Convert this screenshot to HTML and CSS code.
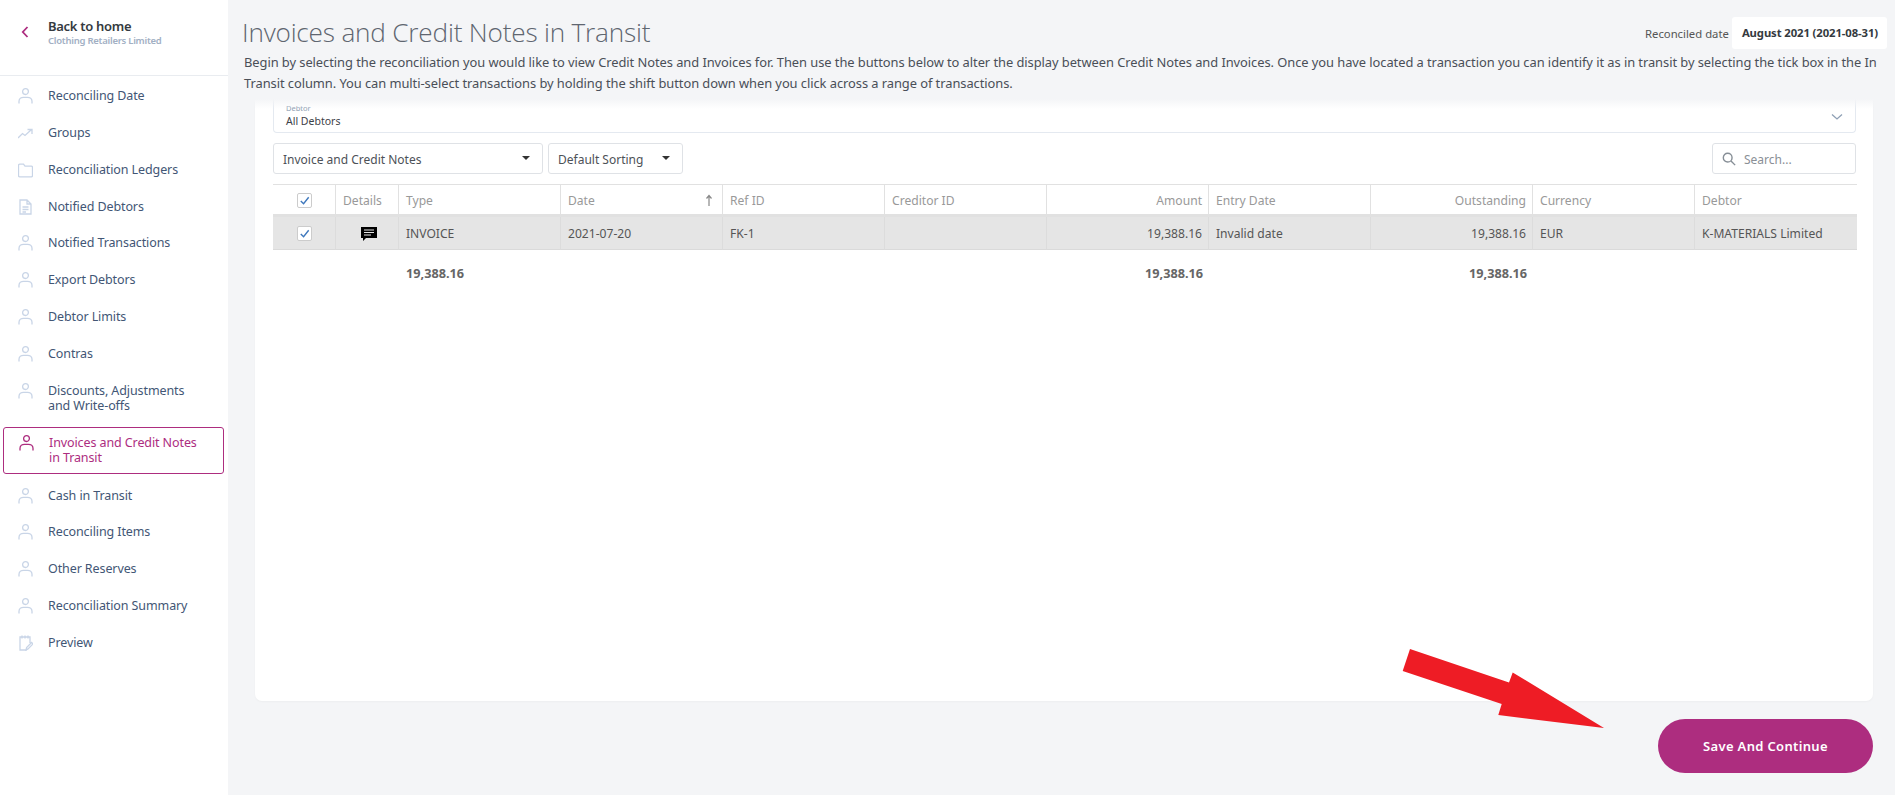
FILE: index.html
```html
<!DOCTYPE html>
<html lang="en">
<head>
<meta charset="utf-8">
<title>Invoices and Credit Notes in Transit</title>
<link rel="stylesheet" href="styles.css">
</head>
<body>
<svg width="0" height="0" class="defs">
  <symbol id="person" viewBox="0 0 15 16"><circle cx="7.5" cy="3.6" r="2.9"/><path d="M1 15.5v-2.2C1 10.8 3.2 9.300 5.500 9.300h4c2.300 0 4.500 1.500 4.500 4v2.200"/></symbol>
</svg>
<div class="page">
  <aside class="sidebar">
    <div class="back">
      <svg class="chev" viewBox="0 0 8 12"><path d="M6.500 1 1.800 6l4.700 5"/></svg>
      <div><div class="back-title">Back to home</div><div class="back-sub">Clothing Retailers Limited</div></div>
    </div>
    <nav class="nav">
      <a class="item"><svg class="ico"><use href="#person"/></svg><span>Reconciling Date</span></a>
      <a class="item"><svg class="ico" viewBox="0 0 15 16"><path d="M0 13l4.500-4.500 2.500 2L13 5M9.500 4.500H14V9"/></svg><span>Groups</span></a>
      <a class="item"><svg class="ico" viewBox="0 0 15 16"><path d="M.5 3.500C.5 2.700 1 2.200 1.800 2.200h3.700l1.500 2h6.300c.8 0 1.200.5 1.200 1.200v8.200c0 .8-.5 1.200-1.200 1.200H1.800c-.8 0-1.300-.4-1.300-1.200z"/></svg><span>Reconciliation Ledgers</span></a>
      <a class="item"><svg class="ico" viewBox="0 0 15 16"><path d="M2 1h7l4 4v10H2zM9 1v4h4M4.500 8h6M4.500 10.500h6M4.500 13h3.500"/></svg><span>Notified Debtors</span></a>
      <a class="item"><svg class="ico"><use href="#person"/></svg><span>Notified Transactions</span></a>
      <a class="item"><svg class="ico"><use href="#person"/></svg><span>Export Debtors</span></a>
      <a class="item"><svg class="ico"><use href="#person"/></svg><span>Debtor Limits</span></a>
      <a class="item"><svg class="ico"><use href="#person"/></svg><span>Contras</span></a>
      <a class="item"><svg class="ico"><use href="#person"/></svg><span>Discounts, Adjustments<br>and Write-offs</span></a>
      <a class="item active"><svg class="ico"><use href="#person"/></svg><span>Invoices and Credit Notes<br>in Transit</span></a>
      <a class="item"><svg class="ico"><use href="#person"/></svg><span>Cash in Transit</span></a>
      <a class="item"><svg class="ico"><use href="#person"/></svg><span>Reconciling Items</span></a>
      <a class="item"><svg class="ico"><use href="#person"/></svg><span>Other Reserves</span></a>
      <a class="item"><svg class="ico"><use href="#person"/></svg><span>Reconciliation Summary</span></a>
      <a class="item"><svg class="ico" viewBox="0 0 15 16"><path d="M9 15H2V2h10v6M4 .5v3M7 .5v3M10 .5v3M8 15l.6-2.500 5-5 1.400 1.400-5 5z"/></svg><span>Preview</span></a>
    </nav>
  </aside>
  <main class="main">
    <header class="head">
      <div class="head-top">
        <h1 class="title">Invoices and Credit Notes in Transit</h1>
        <div class="recon"><span class="recon-label">Reconciled date</span><span class="recon-value">August 2021 (2021-08-31)</span></div>
      </div>
      <p class="intro">Begin by selecting the reconciliation you would like to view Credit Notes and Invoices for. Then use the buttons below to alter the display between Credit Notes and Invoices. Once you have located a transaction you can identify it as in transit by selecting the tick box in the In Transit column. You can multi-select transactions by holding the shift button down when you click across a range of transactions.</p>
    </header>
    <section class="card">
      <div class="debtor">
        <div><div class="debtor-label">Debtor</div><div class="debtor-value">All Debtors</div></div>
        <svg class="debtor-chev" viewBox="0 0 12 8"><path d="M1 1.500 6 6l5-4.500"/></svg>
      </div>
      <div class="tools">
        <div class="select wide"><span>Invoice and Credit Notes</span><i class="caret"></i></div>
        <div class="select narrow"><span>Default Sorting</span><i class="caret"></i></div>
        <div class="search">
          <svg class="search-ico" viewBox="0 0 16 16"><circle cx="6.500" cy="6.500" r="5"/><path d="m10.300 10.300 4.700 4.700"/></svg>
          <span>Search...</span>
        </div>
      </div>
      <table class="grid">
        <colgroup><col class="c-s"><col class="c-s"><col class="c-w"><col class="c-w"><col class="c-w"><col class="c-w"><col class="c-w"><col class="c-w"><col class="c-w"><col class="c-w"><col class="c-w"></colgroup>
        <thead>
          <tr>
            <th class="center"><span class="check"><svg viewBox="0 0 14 14"><path d="M3 7.500 6 10.500 11.500 3.500"/></svg></span></th>
            <th>Details</th><th>Type</th>
            <th><div class="sort"><span>Date</span><svg class="sort-ico" viewBox="0 0 8 12"><path d="M4 12V2M1.500 4.500 4 1.500l2.500 3"/></svg></div></th>
            <th>Ref ID</th><th>Creditor ID</th><th class="num">Amount</th><th>Entry Date</th><th class="num">Outstanding</th><th>Currency</th><th>Debtor</th>
          </tr>
        </thead>
        <tbody>
          <tr class="row">
            <td class="center"><span class="check"><svg viewBox="0 0 14 14"><path d="M3 7.500 6 10.500 11.500 3.500"/></svg></span></td>
            <td class="center"><svg class="msg" viewBox="0 0 18 16"><path d="M1 1h16v11H6l-3 3v-3H1z"/><path class="msg-l" d="M4 4h10M4 6.500h10M4 9h7"/></svg></td>
            <td>INVOICE</td><td>2021-07-20</td><td>FK-1</td><td></td><td class="num">19,388.16</td><td>Invalid date</td><td class="num">19,388.16</td><td>EUR</td><td>K-MATERIALS Limited</td>
          </tr>
        </tbody>
        <tfoot>
          <tr><td></td><td></td><td>19,388.16</td><td></td><td></td><td></td><td class="num">19,388.16</td><td></td><td class="num">19,388.16</td><td></td><td></td></tr>
        </tfoot>
      </table>
    </section>
    <div class="foot"><button class="save">Save And Continue</button></div>
  </main>
  <svg class="arrow" viewBox="0 0 204 82"><polygon points="8,0 0.700,22 99.700,55 96.300,66 202,79 110.700,23.500 107,33.500"/></svg>
</div>
</body>
</html>
```

FILE: styles.css
```css
* { box-sizing: border-box; }
html, body { margin: 0; height: 100%; }
body { font-family: "Noto Sans", "Open Sans", sans-serif; background: #f4f5f7; overflow: hidden; }
.defs { position: absolute; }
.page { position: relative; display: flex; width: 1895px; height: 795px; overflow: hidden; }

.sidebar { width: 228px; flex: none; background: #fff; }
.back { height: 76px; padding: 19px 0 0 21px; display: flex; gap: 19px; border-bottom: 1px solid #e9ecf0; }
.chev { width: 8px; height: 12px; margin-top: 7px; fill: none; stroke: #ad2d7f; stroke-width: 1.8; }
.back-title { font-size: 13px; line-height: 15px; font-weight: 600; color: #343a40; letter-spacing: -0.300px; }
.back-sub { font-size: 9.500px; line-height: 13px; font-weight: 600; color: #a2b0c4; letter-spacing: -0.250px; }
.nav { display: flex; flex-direction: column; padding-top: 1px; }
.item { display: flex; gap: 15px; padding: 11px 0 10.850px 18px; font-size: 12.500px; line-height: 15px; color: #425675; letter-spacing: -0.100px; }
.ico { width: 15px; height: 16px; margin-bottom: -1px; flex: none; fill: none; stroke: #c9d5e7; stroke-width: 1.300; }
.item.active { margin: 3px 4px 3px 3px; padding: 7.500px 0 7.500px 15px; border: 1px solid #ad2d7f; border-radius: 3px; color: #ad2d7f; }
.active .ico { stroke: #ad2d7f; }

.main { position: relative; flex: 1; display: flex; flex-direction: column; min-width: 0; }
.head { height: 99px; padding: 0 8px 0 14px; position: relative; z-index: 1; }
.head::after { content: ""; position: absolute; left: 0; right: 0; top: 99px; height: 10px; background: linear-gradient(#f4f5f7, rgba(255,255,255,0)); }
.head-top { display: flex; justify-content: space-between; height: 52px; padding-top: 17px; }
.title { margin: -3px 0 0; font-size: 26.200px; line-height: 36px; font-weight: 300; color: #5f6670; letter-spacing: -0.200px; font-family: "Open Sans", sans-serif; }
.recon { display: flex; height: 32px; align-items: center; font-size: 11.300px; color: #555; gap: 3px; }
.recon-value { background: #fff; height: 32px; line-height: 32px; padding: 0 9px 0 10px; border-radius: 3px; font-weight: 700; color: #343a40; letter-spacing: -0.100px; }
.intro { margin: 0; padding-left: 2px; font-size: 12.900px; line-height: 21px; color: #4a4f57; letter-spacing: -0.060px; }

.card { height: 602px; margin: 0 22px 0 27px; padding: 0 17px 0 18px; background: #fff; border-radius: 0 0 7px 7px; box-shadow: 0 1px 2px rgba(0,0,0,.03); }
.debtor { height: 34px; display: flex; justify-content: space-between; align-items: flex-start; padding: 4px 12px 0 12px; border: 1px solid #e4e9f0; border-top: 0; border-radius: 0 0 4px 4px; }
.debtor-label { font-size: 7.500px; line-height: 11px; color: #8c9bb0; }
.debtor-value { font-size: 10.500px; line-height: 15px; color: #3d4148; }
.debtor-chev { width: 12px; height: 8px; margin-top: 10px; fill: none; stroke: #8fa0b5; stroke-width: 1.300; }
.tools { display: flex; gap: 5px; margin-top: 10px; height: 31px; }
.select, .search { height: 31px; padding-top: 1px; border: 1px solid #dfe2e6; border-radius: 3px; display: flex; align-items: center; font-size: 12px; color: #4d5157; }
.select { justify-content: space-between; padding: 1px 12px 0 9px; }
.wide { width: 270px; }
.narrow { width: 135px; }
.caret { width: 0; height: 0; margin-top: -2px; border-left: 4px solid transparent; border-right: 4px solid transparent; border-top: 4px solid #333; }
.search { margin-left: auto; width: 144px; padding-left: 9px; gap: 8px; color: #8a8f96; }
.search-ico { width: 14px; height: 14px; fill: none; stroke: #868e96; stroke-width: 1.600; }

.grid { width: 1583px; margin-top: 10px; border-collapse: separate; border-spacing: 0; table-layout: fixed; font-size: 12.100px; }
.c-s { width: 63px; }
.c-w { width: 162px; }
.grid th { height: 33px; padding: 1px 6px 0 7px; font-weight: 400; color: #999; text-align: left; border-top: 1px solid #e1e1e1; border-bottom: 3px solid #e1e1e1; border-right: 1px solid #e1e1e1; }
.grid th:last-child, .row td:last-child { border-right: 0; }
.row td { height: 33px; padding: 1px 6px 0 7px; color: #555; background: #e5e5e5; border-right: 1px solid #dcdcdc; border-bottom: 1px solid #dadada; }
.grid tfoot td { height: 45px; padding: 0 6px 0 7px; font-size: 12.700px; font-weight: 700; color: #666; }
.grid .num { text-align: right; }
.grid .center { text-align: center; }
.sort { display: flex; justify-content: space-between; align-items: center; padding-right: 3px; }
.sort-ico { width: 8px; height: 12px; fill: none; stroke: #888; stroke-width: 1.200; }
.check { display: inline-block; width: 15px; height: 15px; margin-top: -2px; vertical-align: middle; border: 1px solid #ccc; border-radius: 2px; background: #fff; }
.check svg { display: block; width: 13px; height: 13px; fill: none; stroke: #3f78bd; stroke-width: 1.500; }
.msg { display: block; width: 18px; height: 16px; margin: 0 0 0 17px; fill: #000; }
.msg-l { stroke: #e5e5e5; fill: none; stroke-width: 1; }

.foot { display: flex; justify-content: flex-end; padding: 18px 22px 0 0; }
.save { width: 215px; height: 54px; border: 0; border-radius: 27px; background: #ad2d7f; color: #fff; font-family: "Noto Sans", sans-serif; font-size: 13px; font-weight: 600; letter-spacing: 0.330px; }

.arrow { position: absolute; left: 1402px; top: 649px; width: 204px; height: 82px; fill: #ee1c25; }
```
